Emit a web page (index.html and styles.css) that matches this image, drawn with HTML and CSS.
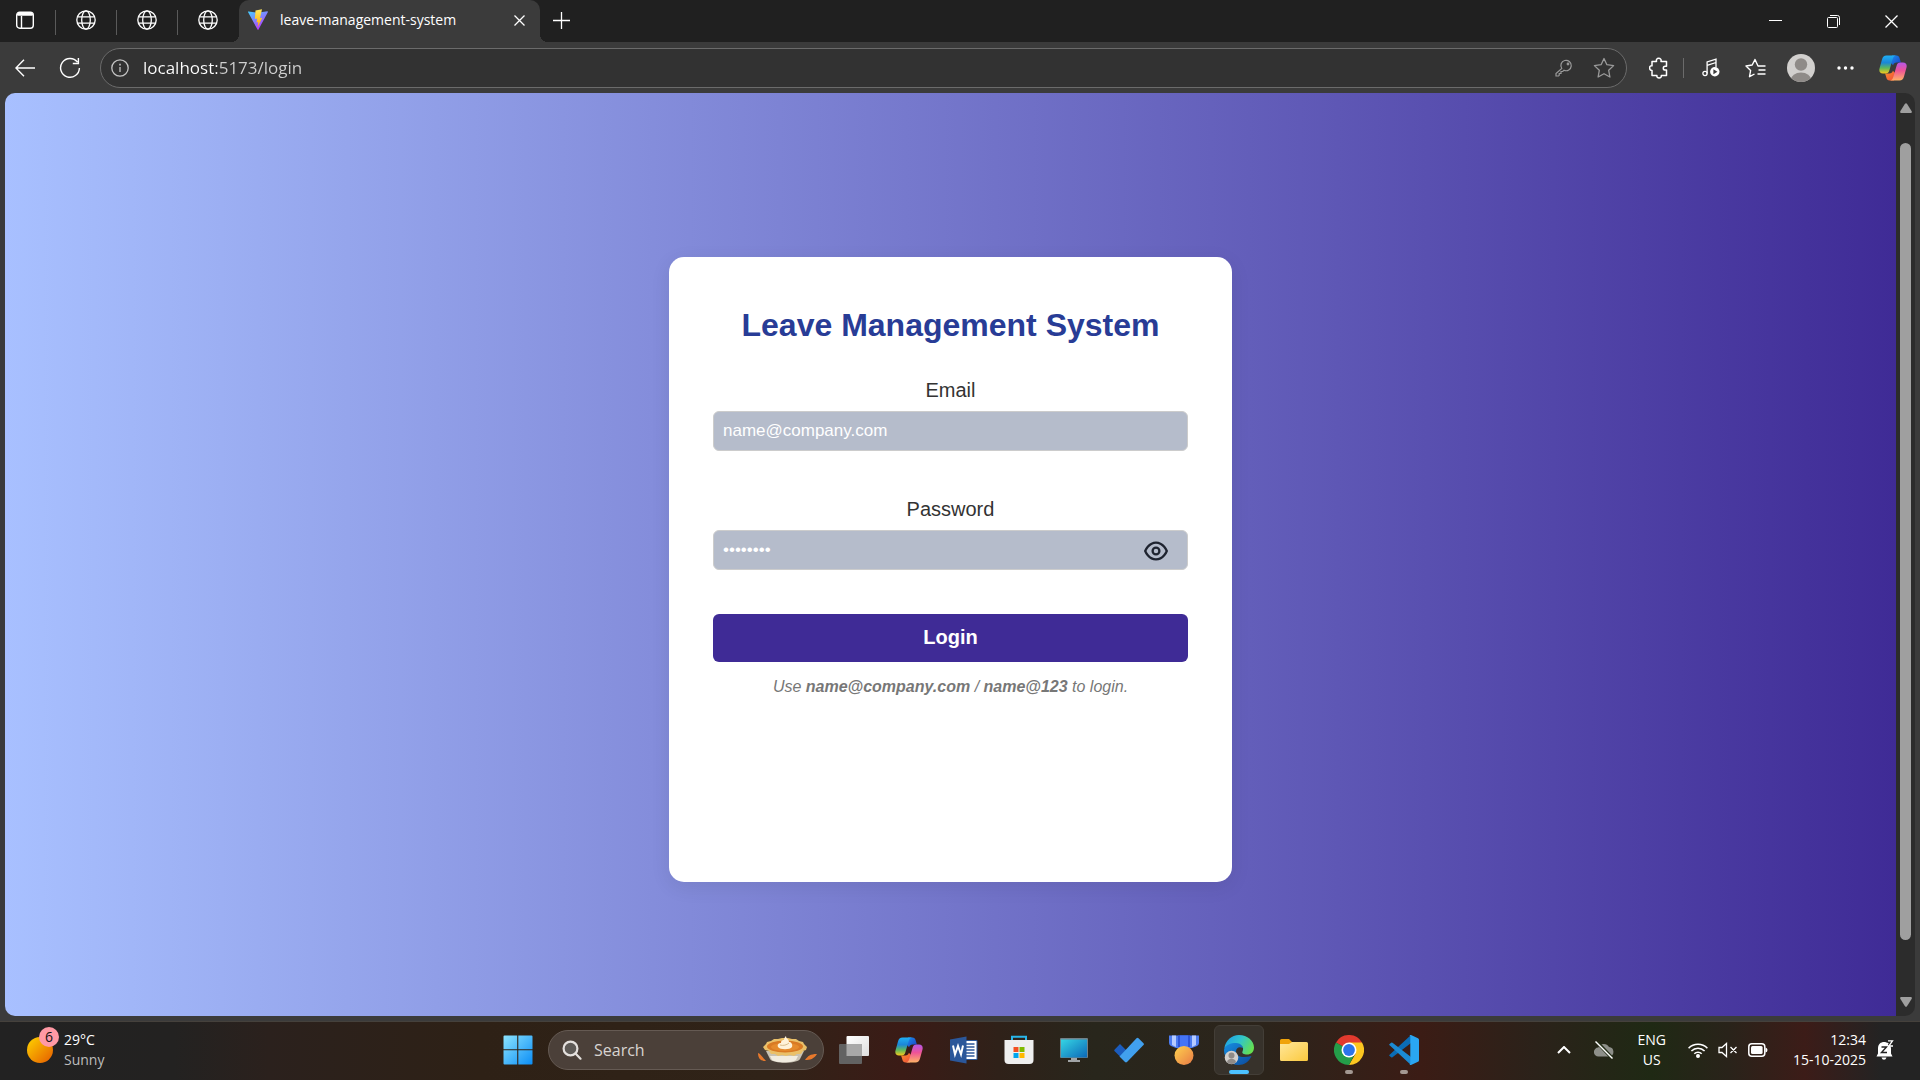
FILE: index.html
```html
<!DOCTYPE html>
<html lang="en">
<head>
<meta charset="utf-8">
<meta name="viewport" content="width=device-width, initial-scale=1">
<title>leave-management-system</title>
<link rel="stylesheet" href="styles.css">
</head>
<body>
<svg class="defs" aria-hidden="true">
  <defs>
    <linearGradient id="copA" x1="0" y1="0" x2="0" y2="1"><stop offset="0" stop-color="#1fb0f5"/><stop offset=".4" stop-color="#1b86d8"/><stop offset=".7" stop-color="#5fb95a"/><stop offset="1" stop-color="#f8c81c"/></linearGradient>
    <linearGradient id="copB" x1="0" y1="0" x2="0" y2="1"><stop offset="0" stop-color="#b457e8"/><stop offset=".45" stop-color="#ee5397"/><stop offset="1" stop-color="#ffb266"/></linearGradient>
    <linearGradient id="copC" x1="0" y1="0" x2="1" y2="1"><stop offset="0" stop-color="#1b8df0"/><stop offset="1" stop-color="#1c3fc0"/></linearGradient>
    <linearGradient id="copD" x1="0" y1="0" x2="1" y2="1"><stop offset="0" stop-color="#f9902a"/><stop offset="1" stop-color="#f04b3c"/></linearGradient>
    <symbol id="globe" viewBox="0 0 20 20">
      <g fill="none" stroke="#fff" stroke-width="1.3"><circle cx="10" cy="10" r="9.2"/><ellipse cx="10" cy="10" rx="4.3" ry="9.2"/><path d="M1.6 6.8h16.8M1.6 13.2h16.8"/></g>
    </symbol>
    <symbol id="copilot" viewBox="0 0 28 26">
      <path fill="url(#copC)" d="M13 .5h4.500c1.700 0 2.600 1 3.100 2.700l1.300 4.300h-4.200c-2 0-3 .9-3.600 2.700L12 8z"/>
      <path fill="url(#copD)" d="M15 25.500h-4.500c-1.700 0-2.600-1-3.100-2.700L6.100 18.500h4.200c2 0 3-.9 3.600-2.700L16 18z"/>
      <path fill="url(#copA)" d="M7.500.5H17c-1.800.3-2.700 1.500-3.300 3.500l-3.300 11.300c-.7 2.300-1.600 3.200-3.900 3.200H4C1 18.500-.2 16.300.5 13.500L3 4.500C3.700 2 5 .5 7.500.5z"/>
      <path fill="url(#copB)" d="M20.500 25.500H11c1.800-.3 2.700-1.500 3.300-3.500l3.300-11.300c.7-2.300 1.600-3.200 3.900-3.200H24c3 0 4.200 2.200 3.500 5L25 21.500c-.7 2.500-2 4-4.500 4z"/>
    </symbol>
  </defs>
</svg>

<header class="tabstrip">
  <button class="tab-menu" aria-label="Tab actions"><svg width="18" height="18" viewBox="0 0 18 18" fill="none" stroke="#fff" stroke-width="1.400"><rect x=".7" y="1.200" width="16.600" height="16" rx="3"/><path d="M1 3.800h16M5.500 5v12"/><path d="M2 3h14" stroke-width="3"/></svg></button>
  <button class="pinned" aria-label="Pinned tab 1"><svg width="20" height="20"><use href="#globe"/></svg></button>
  <button class="pinned" aria-label="Pinned tab 2"><svg width="20" height="20"><use href="#globe"/></svg></button>
  <button class="pinned" aria-label="Pinned tab 3"><svg width="20" height="20"><use href="#globe"/></svg></button>
  <div class="tab">
    <svg width="20" height="22" viewBox="0 0 20 22"><defs><linearGradient id="vA" x1="0" y1="0" x2=".6" y2="1"><stop offset="0" stop-color="#41d1ff"/><stop offset="1" stop-color="#bd34fe"/></linearGradient><linearGradient id="vB" x1="0" y1="0" x2="0" y2="1"><stop offset="0" stop-color="#ffea5c"/><stop offset="1" stop-color="#ffa800"/></linearGradient></defs><path fill="url(#vA)" d="M.6 2.400 9.500 3.800l9.800-1.500c.5 0 .8.4.5.9L10.500 20.600c-.2.400-.8.400-1 0L.1 3.300c-.3-.5 0-1 .5-.9z"/><path fill="url(#vB)" d="m14 .3-6.500 1.300-.6 8.400 2.300-.4-.6 4 1.700-.5-.7 5.200L14.300 8.700l-2.300.5 2-8.900z"/></svg>
    <span class="tab-title">leave-management-system</span>
    <button class="tab-close" aria-label="Close tab"><svg width="11" height="11" viewBox="0 0 11 11" stroke="#fff" stroke-width="1.300"><path d="M.5.5l10 10M10.500.5l-10 10"/></svg></button>
  </div>
  <button class="new-tab" aria-label="New tab"><svg width="17" height="17" viewBox="0 0 17 17" stroke="#fff" stroke-width="1.300"><path d="M8.500 0v17M0 8.500h17"/></svg></button>
  <div class="window-controls">
    <button aria-label="Minimise"><svg width="13" height="13" viewBox="0 0 13 13" stroke="#fff"><path d="M0 5.500h13"/></svg></button>
    <button aria-label="Restore"><svg width="13" height="13" viewBox="0 0 13 13" fill="none" stroke="#fff"><rect x=".5" y="2.500" width="10" height="10" rx="1"/><path d="M3 .5h7.500a2 2 0 0 1 2 2V10"/></svg></button>
    <button aria-label="Close"><svg width="13" height="13" viewBox="0 0 13 13" stroke="#fff" stroke-width="1.300"><path d="M.5.5l12 12M12.500.5l-12 12"/></svg></button>
  </div>
</header>

<nav class="toolbar">
  <button class="nav-button" aria-label="Back"><svg width="20" height="18" viewBox="0 0 20 18" fill="none" stroke="#fff" stroke-width="1.400"><path d="M20 9H1M9 .8.900 9 9 17.200"/></svg></button>
  <button class="nav-button" aria-label="Refresh"><svg width="22" height="22" viewBox="0 0 22 22" fill="none" stroke="#fff" stroke-width="1.400"><path d="M18.500 5.200A9.400 9.400 0 1 0 20.400 11M19.400 1v5.500h-5.600"/></svg></button>
  <div class="address">
    <svg width="18" height="18" viewBox="0 0 18 18" fill="none" stroke="#c4c4c4" stroke-width="1.300"><circle cx="9" cy="9" r="8.200"/><path d="M9 8v5"/><path d="M9 4.800v1.600" stroke-width="1.600"/></svg>
    <input class="url" type="text" value="localhost:5173/login" aria-label="Address">
    <svg width="18" height="18" viewBox="0 0 18 18" fill="none" stroke="#9a9a9a" stroke-width="1.200"><path d="M6.800 9.500A5.200 5.200 0 1 1 9 11.300l-1.300 1.200H6v2H4.200v1.800L3.500 17H1v-2.500l5.800-5z"/><circle cx="13" cy="5" r=".8"/></svg>
    <svg width="22" height="22" viewBox="0 0 22 22" fill="none" stroke="#9a9a9a" stroke-width="1.300" stroke-linejoin="round"><path d="m11 1.500 2.900 6.200 6.700.9-4.900 4.700 1.200 6.700-5.900-3.300L5.100 20l1.200-6.700L1.400 8.600l6.700-.9z"/></svg>
  </div>
  <div class="tools">
    <button class="tool" aria-label="Extensions"><svg width="20" height="22" viewBox="0 0 20 22" fill="none" stroke="#fff" stroke-width="1.500" stroke-linejoin="round"><path d="M3 4.500h4.500C7 2.500 8 1.300 9.700 1.300s2.800 1.200 2.300 3.200h5.500v4.800h-1.300a1.900 1.900 0 0 0 0 3.800h1.300v5.400h-5.200c.3 1.600-.7 2.500-2.200 2.500s-2.500-.9-2.200-2.500H3v-5c-1.600 0-2.400-1-2.400-2.500S1.400 8.600 3 8.800z"/></svg></button>
    <span class="tool-divider"></span>
    <button class="tool" aria-label="Media"><svg width="18" height="20" viewBox="0 0 18 20" fill="none" stroke="#fff" stroke-width="1.300"><circle cx="3" cy="15.500" r="2.100"/><path d="M5.100 15.500V4L14 1.200V9M5.100 7.300 14 4.500"/><circle cx="12.800" cy="13.800" r="4.700" fill="#fff" stroke="none"/><path fill="#3b3b3b" stroke="none" d="m11.400 11.300 4 2.500-4 2.500z"/></svg></button>
    <button class="tool" aria-label="Favourites"><svg width="22" height="20" viewBox="0 0 22 20" fill="none" stroke="#fff" stroke-width="1.400" stroke-linejoin="round"><path d="M20.500 8H13l-3-6.500L7.200 7 1 8l4.600 4.500-1.100 6.200 5-2.700M13 8h7.500M13.500 12h7M12.500 16h8"/></svg></button>
    <button class="tool" aria-label="Profile"><svg width="28" height="28" viewBox="0 0 28 28"><clipPath id="av"><circle cx="14" cy="14" r="14"/></clipPath><g clip-path="url(#av)"><path fill="#d2d0ce" d="M0 0h28v28H0z"/><circle cx="14" cy="10.500" r="6.200" fill="#8f8b88"/><ellipse cx="14" cy="26" rx="10.200" ry="7.500" fill="#8f8b88"/></g></svg></button>
    <button class="tool" aria-label="Settings and more"><svg width="17" height="4" viewBox="0 0 17 4" fill="#fff"><circle cx="2" cy="2" r="1.700"/><circle cx="8.500" cy="2" r="1.700"/><circle cx="15" cy="2" r="1.700"/></svg></button>
    <button class="tool" aria-label="Copilot"><svg width="28" height="26"><use href="#copilot"/></svg></button>
  </div>
</nav>

<div class="viewport">
  <main class="page">
    <form class="card">
      <h1>Leave Management System</h1>
      <div class="field">
        <label for="email">Email</label>
        <input id="email" type="email" placeholder="name@company.com">
      </div>
      <div class="field">
        <label for="password">Password</label>
        <div class="password-box">
          <input id="password" type="password" placeholder="••••••••">
          <button class="reveal" type="button" aria-label="Show password"><svg width="24" height="24" viewBox="0 0 24 24" fill="none" stroke="#1f2430" stroke-width="2.300" stroke-linejoin="round"><path d="M1.200 12S4.500 3.600 12 3.600 22.800 12 22.800 12 19.500 20.400 12 20.400 1.200 12 1.200 12z"/><circle cx="12" cy="12" r="3.400"/></svg></button>
        </div>
      </div>
      <button class="login" type="submit">Login</button>
      <p class="hint">Use <b>name@company.com</b> / <b>name@123</b> to login.</p>
    </form>
  </main>
  <div class="scrollbar" aria-hidden="true">
    <svg width="12" height="10" viewBox="0 0 12 10" fill="#9f9f9f"><path d="M5 .8q1-1.200 2 0l4.700 7.400q.6 1.600-.8 1.800H1.100Q-.3 9.800.3 8.200z"/></svg>
    <span class="thumb"></span>
    <svg width="12" height="10" viewBox="0 0 12 10" fill="#9f9f9f"><path d="M5 9.200q1 1.200 2 0l4.700-7.400q.6-1.600-.8-1.800H1.100Q-.3.200.3 1.800z"/></svg>
  </div>
</div>

<footer class="taskbar">
  <div class="weather">
    <span class="sun"><span class="sun-badge">6</span></span>
    <span class="lines"><span>29°C</span><span class="dim">Sunny</span></span>
  </div>
  <div class="apps">
    <button class="app" aria-label="Start"><svg width="30" height="30" viewBox="0 0 30 30"><defs><linearGradient id="win" x1="0" y1="0" x2="1" y2="1"><stop offset="0" stop-color="#8ce4ff"/><stop offset="1" stop-color="#0b8df5"/></linearGradient></defs><path fill="url(#win)" d="M1.500.5h12.700v13.700H.5V1.500q0-1 1-1zM15.300.5h13.200q1 0 1 1v12.700H15.300zM.5 15.300h13.700v14.200H1.500q-1 0-1-1zM15.300 15.300h14.200v13.200q0 1-1 1H15.300z"/></svg></button>
    <label class="search">
      <svg width="20" height="20" viewBox="0 0 20 20" fill="none" stroke="#e4e0dd" stroke-width="2.200"><circle cx="8.500" cy="8.500" r="6.900" fill="#5e5a56"/><path d="m13.500 13.500 5 5.200" stroke-linecap="round"/></svg>
      <input type="search" placeholder="Search">
      <svg width="60" height="28" viewBox="0 0 60 28"><path fill="#e8792c" d="M1 17c3 1 4 4 8 8-5 0-8-2-8-8zM60 18c-7 0-9 2-12 6 5 0 9-1 12-6z"/><path fill="#c9c2b4" d="M9 15h38l-4 8c-3 5-27 5-30 0z"/><path fill="#f1ece0" d="M13 20h28l-2 4c-4 3-20 3-24 0z"/><path fill="#eac069" d="m6 11 3-3 1-2 4-1 3-2 4 0 4-1h6l4 1 4 0 3 2 4 1 1 2 3 3-1 3-3 1-2 3-4 0-3 2-4-1-4 1-4-1-4 1-3-2-4 0-2-3-4-1z"/><ellipse cx="28" cy="10.500" rx="18" ry="6" fill="#d97a24"/><ellipse cx="28" cy="11" rx="14" ry="4" fill="#e58a2c"/><path fill="#fff2d8" d="M21 11c-1-3 1-4 3-4 0-3 2-3 3-3 0-2 1-3 2-4 0 3 3 3 3 6 2 0 4 2 3 5-2 3-12 3-14 0z"/><path fill="none" stroke="#d9bd8c" d="M23 9c3 1 7 0 9-2"/></svg>
    </label>
    <button class="app" aria-label="Task view"><svg width="30" height="28" viewBox="0 0 30 28"><defs><linearGradient id="tv" x1="0" y1="0" x2="1" y2="1"><stop offset="0" stop-color="#fff"/><stop offset="1" stop-color="#dedede"/></linearGradient></defs><rect x="7.500" width="22.500" height="20" rx="1" fill="url(#tv)"/><rect y="8" width="23" height="20" rx="1" fill="#626262"/><path fill="#a8a8a8" d="M7.500 8H23v12H7.500z"/></svg></button>
    <button class="app" aria-label="Copilot"><svg width="28" height="26"><use href="#copilot"/></svg></button>
    <button class="app" aria-label="Word"><svg width="28" height="28" viewBox="0 0 28 28"><path fill="#fff" stroke="#2b579a" d="M13 4.500h14v19H13z"/><path stroke="#2b579a" stroke-width="1.500" d="M16 8h8.500M16 11h8.500M16 14h8.500M16 17h8.500M16 20h8.500"/><path fill="#2b579a" d="M0 3.500 16.500.5v27L0 24.500z"/><path fill="none" stroke="#fff" stroke-width="2" d="m3 9.500 2 9 3-8.500 3 8.500 2-9"/></svg></button>
    <button class="app" aria-label="Microsoft Store"><svg width="30" height="30" viewBox="0 0 30 30"><path fill="none" stroke="#29b6ea" stroke-width="2" d="M8 6V1.800h14V6"/><path fill="#efefef" d="M.5 5h29v20q0 4-4 4h-21q-4 0-4-4z"/><path fill="#f25022" d="M9.500 12h5v5h-5z"/><path fill="#7fba00" d="M15.500 12h5v5h-5z"/><path fill="#00a4ef" d="M9.500 18h5v5h-5z"/><path fill="#ffb900" d="M15.500 18h5v5h-5z"/></svg></button>
    <button class="app" aria-label="This PC"><svg width="28" height="24" viewBox="0 0 28 24"><defs><linearGradient id="pc" x1="0" y1="0" x2="1" y2="1"><stop offset="0" stop-color="#35d5e4"/><stop offset="1" stop-color="#0c68b8"/></linearGradient></defs><path fill="#a1a4a6" d="M11 19h6v3h3v2H8v-2h3z"/><rect width="28" height="20" rx="1" fill="#718189"/><path fill="url(#pc)" d="M1 1.500h26v18H1z"/></svg></button>
    <button class="app" aria-label="To Do"><svg width="30" height="26" viewBox="0 0 30 26"><path fill="#1b5cbd" d="m6 7 7 7-6 6.500-6.300-6.200q-.9-.9 0-1.800z"/><path fill="#41a0ee" d="M22.500 1.200q1-1 2 0l5 5q.8 1 0 1.900L13 25q-1 .8-2 0l-5.500-5.500z"/></svg></button>
    <button class="app" aria-label="Rewards"><svg width="30" height="30" viewBox="0 0 30 30"><defs><linearGradient id="md" x1="0" y1="0" x2="1" y2="1"><stop offset="0" stop-color="#ffd24e"/><stop offset="1" stop-color="#e87a45"/></linearGradient></defs><path fill="#4c7cf0" d="M0 .5h30V8q0 2-2 3l-5 2H7l-5-2q-2-1-2-3z"/><path fill="#b6cbff" d="M3 .5h4V12l-4-2zM23 .5h4V10l-4 2z"/><path fill="#2c54d8" d="M9 .5h12V12H9z"/><path fill="#4574f5" d="M11 .5h8V12h-8z"/><circle cx="15" cy="20.500" r="9.500" fill="url(#md)"/></svg></button>
    <button class="app current" aria-label="Edge"><svg width="30" height="30" viewBox="0 0 30 30"><defs><linearGradient id="eA" x1="0" y1=".2" x2="1" y2=".6"><stop offset="0" stop-color="#1d9ee8"/><stop offset=".5" stop-color="#31c5c9"/><stop offset="1" stop-color="#66e04f"/></linearGradient><linearGradient id="eB" x1="0" y1="0" x2="1" y2="1"><stop offset="0" stop-color="#1690e4"/><stop offset="1" stop-color="#0c4a9c"/></linearGradient></defs><path fill="url(#eB)" d="M0 15C1 9 6 6.500 11 6.500c5 0 8 3 8 6.500-4-2-7 0-7 3.500 0 5 6 7 15.500 4.500C25 27 20 30 14.500 30 6 30 0 23.500 0 15z"/><path fill="url(#eA)" d="M.3 13.500C1.500 5.500 7.500 0 15 0c8.500 0 15 6 15 12.500 0 4.500-3 7-7 7-3 0-5.500-1-4.500-3 2-4-1-8.500-6.500-8.500C6.500 8 2 10 .3 13.500z"/><circle cx="7.500" cy="22.500" r="6.800" fill="#d2d0ce"/><circle cx="7.500" cy="20.500" r="3" fill="#8f8b88"/><path fill="#8f8b88" d="M3 27.500c0-5 9-5 9 0q-4.500 3-9 0z"/></svg></button>
    <button class="app" aria-label="File Explorer"><svg width="28" height="22" viewBox="0 0 28 22"><defs><linearGradient id="fo" x1="0" y1="0" x2="1" y2="1"><stop offset="0" stop-color="#ffe79a"/><stop offset="1" stop-color="#fbc93e"/></linearGradient></defs><path fill="#f0a30a" d="M0 1.500Q0 0 1.500 0H9l3 3h14v6H0z"/><path fill="url(#fo)" d="M0 5h9l3-2h14.500Q28 3 28 4.500v16q0 1.500-1.500 1.500h-25Q0 22 0 20.500z"/></svg></button>
    <button class="app running" aria-label="Chrome"><svg width="30" height="30" viewBox="0 0 30 30"><path fill="#e23a2e" d="M15 15 2 7.500a15 15 0 0 1 26 0z"/><path fill="#249d49" d="M15 15v15A15 15 0 0 1 2 7.500z"/><path fill="#fcc620" d="M15 7.500h13A15 15 0 0 1 15 30l6.500-11.300z"/><path fill="#249d49" d="m21 18.500-6 11.500L8.500 18.800z"/><circle cx="15" cy="15" r="7.500" fill="#fff"/><circle cx="15" cy="15" r="5.900" fill="#2b74ea"/></svg></button>
    <button class="app running" aria-label="Visual Studio Code"><svg width="30" height="30" viewBox="0 0 30 30"><path fill="#0b6cb5" d="M.6 19.700 22 0v8L3.500 22.300q-.7.400-1.300 0L.6 21q-.8-.6 0-1.300z"/><path fill="#1b8ad3" d="M.6 10.300 22 30v-8L3.500 7.700q-.7-.4-1.300 0L.6 9q-.8.600 0 1.300z"/><path fill="#2aa6f2" d="M22 0l7 3.200q1 .5 1 1.500v20.600q0 1-1 1.500L22 30q-1 .3-1.600-.5.900.2.900-1V1.500q0-1.200-.9-1Q21-.3 22 0z"/></svg></button>
  </div>
  <div class="tray">
    <button class="tray-chevron" aria-label="Show hidden icons"><svg width="14" height="8" viewBox="0 0 14 8" fill="none" stroke="#fff" stroke-width="2"><path d="m1 7 6-6 6 6"/></svg></button>
    <svg width="20" height="18" viewBox="0 0 20 18"><path fill="#8d8f89" d="M4.500 15.500a4.500 4.500 0 0 1-.2-9A6 6 0 0 1 15 6a4.800 4.800 0 0 1 .5 9.500z"/><path stroke="#263019" stroke-width="3.500" d="m3 1 15 16"/><path stroke="#fff" stroke-width="1.400" d="m1.500.5 17 17"/></svg>
    <span class="lines language"><span>ENG</span><span>US</span></span>
    <svg width="20" height="16" viewBox="0 0 20 16" fill="none" stroke="#fff" stroke-width="1.600"><path d="M.6 6.200a13.300 13.300 0 0 1 18.800 0M3.400 9a9.300 9.300 0 0 1 13.200 0M6.300 11.800a5.200 5.200 0 0 1 7.400 0"/><circle cx="10" cy="14" r="1.200" fill="#fff"/></svg>
    <svg width="20" height="16" viewBox="0 0 20 16" fill="none" stroke="#fff" stroke-width="1.300"><path d="M1 5.500h3L8.500 1.500v13L4 10.500H1zM12.500 5l6 6M18.500 5l-6 6"/></svg>
    <svg width="20" height="14" viewBox="0 0 20 14"><rect x=".8" y=".8" width="16" height="12.400" rx="3" fill="none" stroke="#fff" stroke-width="1.500"/><rect x="3" y="3" width="11.600" height="8" rx="1.500" fill="#fff"/><path fill="#fff" d="M17.500 4.500q2 .5 2 2.500t-2 2.500z"/></svg>
    <span class="lines clock"><span>12:34</span><span>15-10-2025</span></span>
    <svg width="18" height="20" viewBox="0 0 18 20"><path fill="#fff" d="M2 8.500C2 4 5 2 8 2s7 2 7 6.500v5l1.500 3h-16l1.500-3zM5.500 17.500h5q-.7 2.300-2.500 2.300t-2.500-2.300z"/><path fill="none" stroke="#222" stroke-width="3" d="M12 .8h5l-4 5"/><path fill="none" stroke="#222" stroke-width="1.400" d="M5.500 7h5l-5 5.500h5.500"/><path fill="none" stroke="#fff" stroke-width="1.300" d="M12 .8h4.500L12.800 6H17"/></svg>
  </div>
</footer>
</body>
</html>
```
FILE: styles.css
```css
* { box-sizing: border-box; }

body {
  margin: 0;
  min-height: 100vh;
  display: flex;
  flex-direction: column;
  background: #3b3b3b;
  color: #fff;
  font: 14px/20px "Segoe UI", "Open Sans", "Noto Sans", sans-serif;
}

button {
  display: flex;
  align-items: center;
  justify-content: center;
  padding: 0;
  border: 0;
  background: none;
  color: inherit;
  font: inherit;
}

input { min-width: 0; border: 0; outline: 0; font: inherit; }
svg { flex: none; display: block; }
.defs { position: absolute; width: 0; height: 0; }

/* Tab strip */
.tabstrip { display: flex; height: 42px; background: #202020; }
.tab-menu { width: 55px; height: 40px; padding-right: 5px; }
.pinned {
  width: 61px;
  height: 40px;
  background: linear-gradient(#5a5a5a, #5a5a5a) 0 10px / 1px 25px no-repeat;
}
.tab {
  position: relative;
  display: flex;
  align-items: center;
  gap: 12px;
  width: 301px;
  margin-left: 1px;
  padding: 0 15px 2px 9px;
  border-radius: 10px 10px 0 0;
  background: #3b3b3b;
}
.tab::before, .tab::after {
  content: "";
  position: absolute;
  bottom: 0;
  width: 8px;
  height: 8px;
}
.tab::before { right: 100%; background: radial-gradient(circle at 0 0, #202020 8px, #3b3b3b 8px); }
.tab::after { left: 100%; background: radial-gradient(circle at 100% 0, #202020 8px, #3b3b3b 8px); }
.tab-title { flex: 1; white-space: nowrap; }
.new-tab { width: 42px; height: 40px; }
.window-controls { display: flex; margin-left: auto; }
.window-controls button { width: 58px; }

/* Toolbar */
.toolbar { display: flex; align-items: center; height: 51px; padding: 0 8px 0 2px; }
.nav-button { width: 45px; height: 40px; }
.address {
  flex: 1;
  display: flex;
  align-items: center;
  gap: 20px;
  height: 40px;
  margin-left: 8px;
  padding: 0 11px 0 10px;
  border: 1px solid #6b6b6b;
  border-radius: 20px;
  background: #323232;
}
.url {
  flex: 1;
  height: 32px;
  margin-left: -6px;
  padding: 0;
  background: linear-gradient(90deg, #fff 74px, #d0d0d0 74px) text;
  color: transparent;
  font-size: 17px;
}
.tools { display: flex; align-items: center; }
.tool { width: 45px; height: 40px; }
.tool:first-child { width: 48px; margin-left: 8px; }
.tool:last-child { width: 38px; margin-left: 6px; }
.tool-divider { width: 1px; height: 20px; background: #6b6b6b; }
.tool-divider + .tool { margin-left: 4px; }

/* Page area */
.viewport {
  flex: 1;
  display: flex;
  margin: 0 5px 5px;
  border-radius: 10px;
  overflow: hidden;
}
.page {
  flex: 1;
  display: flex;
  align-items: center;
  justify-content: center;
  padding-top: 30px;
  background: linear-gradient(90deg, #a8c0ff, #3f2b96);
  font-family: Arial, "Liberation Sans", sans-serif;
}
.card {
  width: 563px;
  min-height: 625px;
  padding: 44px;
  border-radius: 15px;
  background: #fff;
  box-shadow: 0 5px 20px rgba(0, 0, 0, 0.08);
  color: #333;
  text-align: center;
}
h1 { margin: 0 0 30px; padding-top: 1px; color: #283c96; font-size: 32px; line-height: 46px; }
.field { display: flex; flex-direction: column; gap: 9px; margin-bottom: 46px; }
.field label { font-size: 20px; line-height: 24px; }
.field input {
  width: 100%;
  height: 40px;
  padding: 0 9px;
  border: 1px solid #ccc;
  border-radius: 6px;
  background: #b5bccb;
  color: #fff;
  font-size: 17px;
}
.field input::placeholder { color: #fff; opacity: 1; }
.password-box { position: relative; }
.reveal { position: absolute; top: 9px; right: 20px; }
.login {
  width: 100%;
  height: 48px;
  margin-top: -2px;
  padding-bottom: 2px;
  border-radius: 6px;
  background: #3f2b96;
  color: #fff;
  font-size: 20px;
  font-weight: 700;
}
.hint { margin: 15px 0 0; color: #777; font-size: 16px; font-style: italic; }

.scrollbar {
  display: flex;
  flex-direction: column;
  align-items: center;
  gap: 30px;
  width: 19px;
  padding: 10px 0 9px;
  background: #2c2c2c;
}
.thumb { flex: 1; width: 11px; margin-bottom: 27px; border-radius: 6px; background: #9f9f9f; }

/* Taskbar */
.taskbar {
  display: grid;
  grid-template-columns: 1fr auto 1fr;
  align-items: center;
  height: 59px;
  padding-bottom: 2px;
  border-top: 1px solid #45413c;
  background: linear-gradient(90deg, #222 0, #232221 9%, #2b211d 14%, #2e2116 25%, #302318 40%, #3b1b16 47%, #2f2119 52%, #28261c 57%, #2c241b 66%, #3b1c15 74%, #2b221a 80%, #1f2914 86%, #29231a 90%, #3c1c18 94%, #232323 98%);
}
.lines { display: flex; flex-direction: column; }
.dim { color: #bdbdbd; }
.weather { display: flex; align-items: center; gap: 11px; padding-left: 27px; }
.sun {
  position: relative;
  width: 26px;
  height: 26px;
  border-radius: 50%;
  background: linear-gradient(135deg, #ffd500, #e55b00);
}
.sun-badge {
  position: absolute;
  top: -10px;
  right: -6px;
  width: 20px;
  height: 20px;
  border-radius: 50%;
  background: #ff99a4;
  color: #111;
  text-align: center;
}
.apps { display: flex; align-items: center; gap: 5px; padding-left: 2px; }
.app { position: relative; width: 50px; height: 50px; border-radius: 6px; }
.current { border: 1px solid #433e37; background: #37322b; }
.current::after, .running::after {
  content: "";
  position: absolute;
  bottom: 1px;
  width: 8px;
  height: 4px;
  border-radius: 2px;
  background: #a39892;
}
.current::after { bottom: 0; width: 20px; background: #4cc2ff; }
.search {
  display: flex;
  align-items: center;
  gap: 12px;
  width: 276px;
  height: 40px;
  padding: 0 6px 0 13px;
  border: 1px solid #655a53;
  border-radius: 20px;
  background: #4b4039;
}
.search input { flex: 1; padding: 0; background: none; font-size: 16px; }
.search input::placeholder { color: #d8d4d1; opacity: 1; }
.tray { display: flex; align-items: center; justify-content: flex-end; gap: 10px; padding-right: 26px; }
.tray-chevron { margin-right: 13px; }
.language { align-items: center; margin: 0 12px 0 13px; }
.clock { align-items: flex-end; margin-left: 15px; }
```
